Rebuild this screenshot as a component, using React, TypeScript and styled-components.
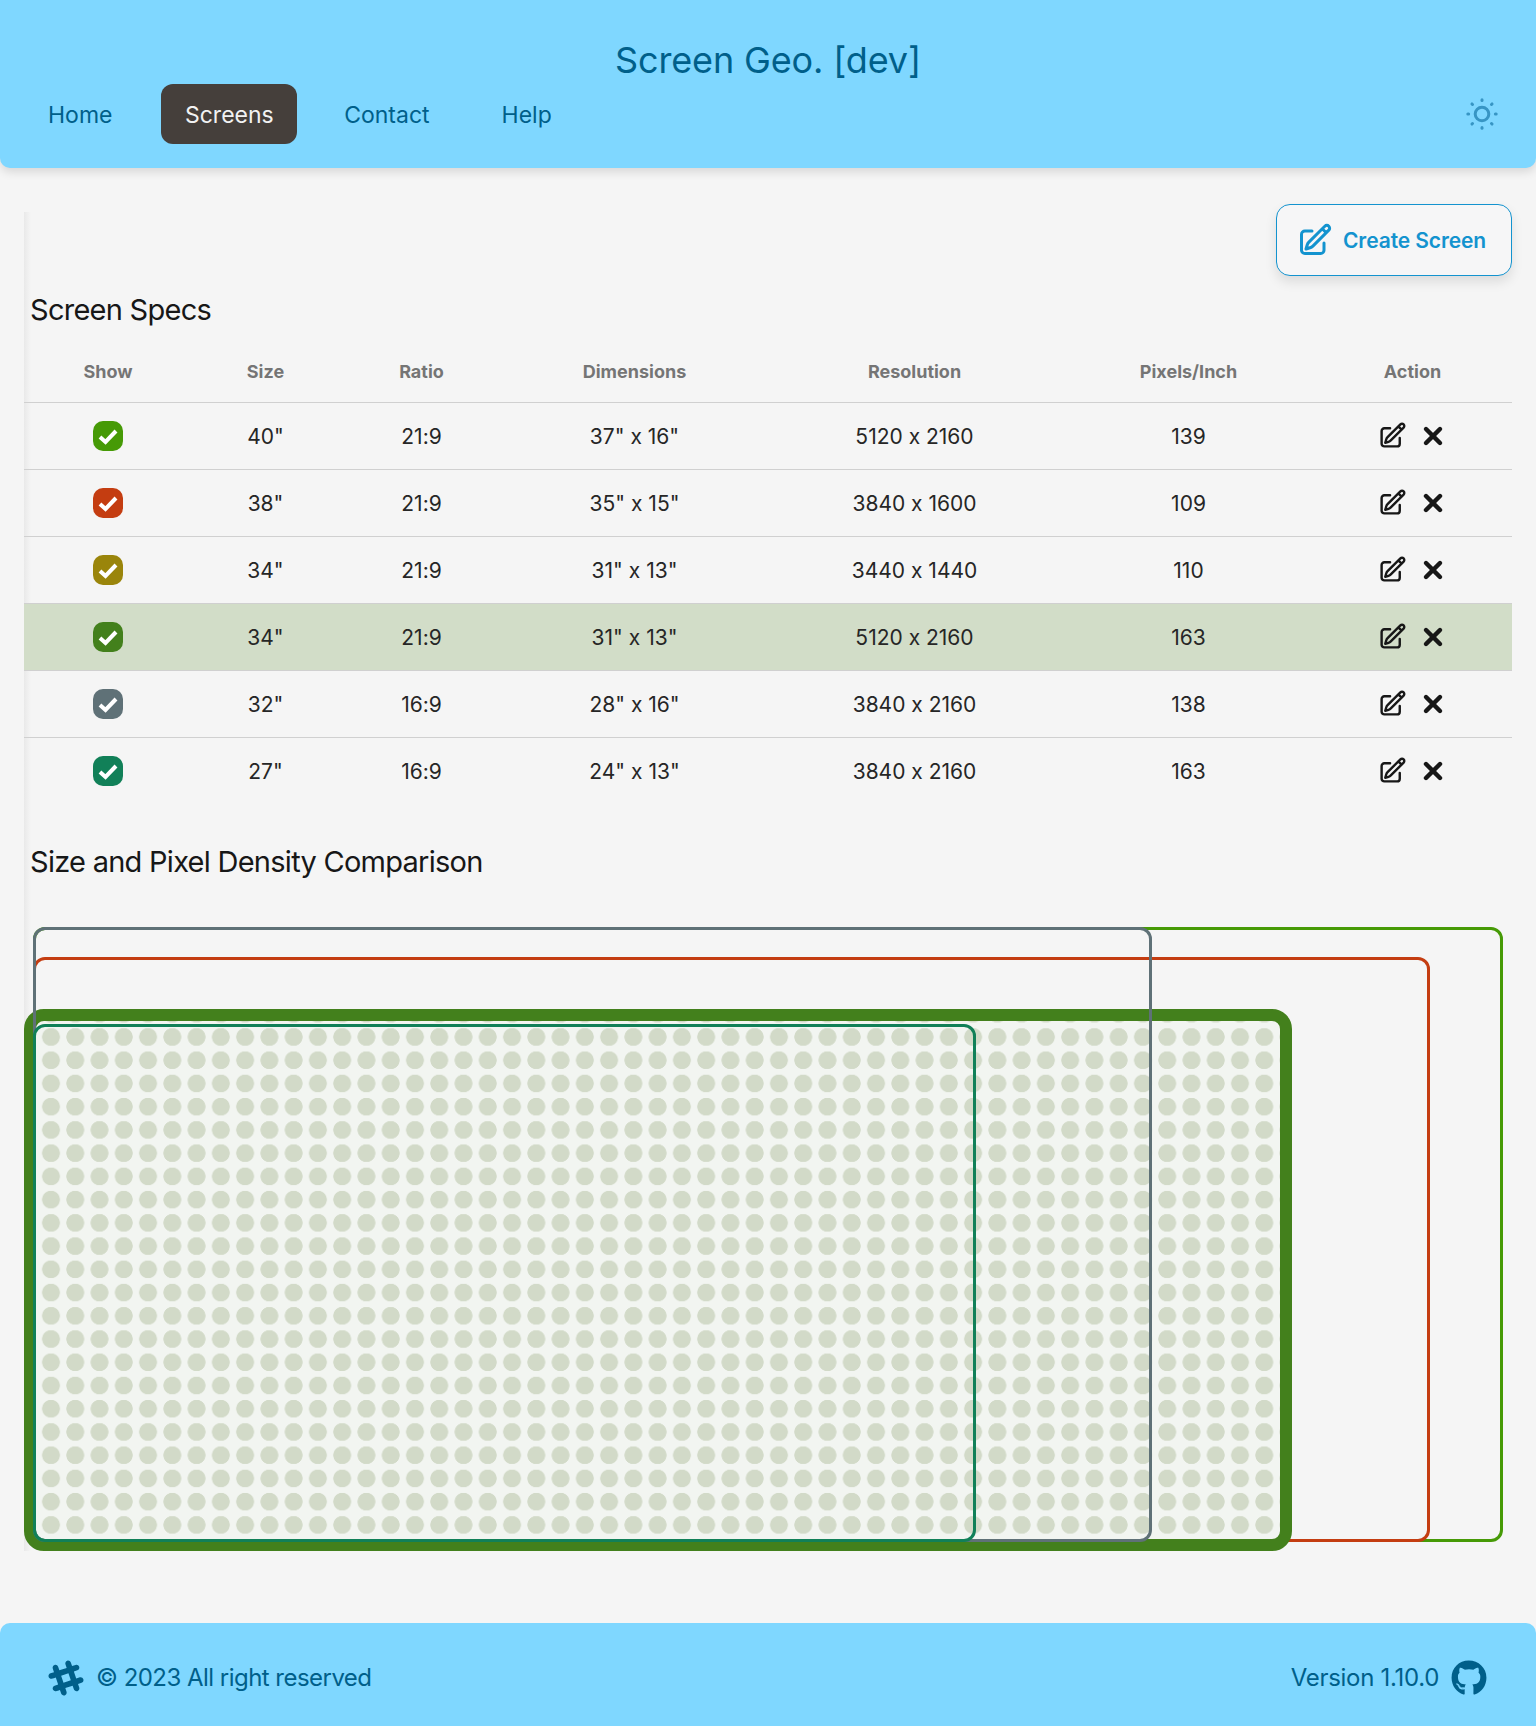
import styled, { createGlobalStyle } from 'styled-components';
import { FaGithub, FaSlackHash } from 'react-icons/fa';
import { HiOutlinePencilSquare } from 'react-icons/hi2';
import { X } from 'lucide-react';

const GlobalStyle = createGlobalStyle`
	* {
		box-sizing: border-box;
	}
	body {
		margin: 0;
		background-color: #f5f5f5;
		color: #171717;
		font-family: Inter, 'Liberation Sans', sans-serif;
		font-feature-settings: 'calt' 0;
	}
`;

const Header = styled.header`
	height: 168px;
	padding: 41px 24px 0;
	background-color: #7fd7ff;
	border-radius: 0 0 10px 10px;
	box-shadow: 0 4px 10px rgba(0, 0, 0, 0.12);
`;
const Title = styled.h1`
	margin: 0;
	height: 38px;
	font-size: 36px;
	line-height: 38px;
	font-weight: 400;
	letter-spacing: -0.15px;
	text-align: center;
	color: #005f8a;
`;
const NavBar = styled.nav`
	display: flex;
	align-items: center;
	justify-content: space-between;
	margin-top: 5px;
`;
const NavLinks = styled.div`
	display: flex;
	gap: 24px;
`;
const NavLink = styled.a<{ $active?: boolean }>`
	height: 60px;
	margin: ${(props) => (props.$active ? '0 -1px 0 1px' : '0')};
	padding: ${(props) => (props.$active ? '2px 23.5px 0' : '2px 24px 0')};
	display: flex;
	align-items: center;
	font-size: 23px;
	border-radius: 12px;
	color: ${(props) => (props.$active ? '#f2f2f2' : '#005f8a')};
	background-color: ${(props) => (props.$active ? '#453f3b' : 'transparent')};
`;
const SunIcon = styled.svg`
	width: 32px;
	height: 32px;
	margin-right: 14px;
	color: #3795c4;
`;

const Main = styled.main`
	padding: 36px 24px 72px;
`;
const Panel = styled.section`
	background: linear-gradient(to right, #e9e9e9, #f5f5f5) no-repeat 0 8px / 7px calc(100% - 8px);
`;
const Toolbar = styled.div`
	display: flex;
	justify-content: flex-end;
`;
const CreateButton = styled.button`
	width: 236px;
	height: 72px;
	padding: 0 0 0 20px;
	display: flex;
	align-items: center;
	gap: 10px;
	font-family: inherit;
	font-feature-settings: inherit;
	font-size: 21px;
	font-weight: 600;
	letter-spacing: -0.1px;
	color: #1393cf;
	background-color: #f6f6f7;
	border: 1px solid #1393cf;
	border-radius: 14px;
	box-shadow: 0 6px 12px rgba(0, 0, 0, 0.1);
`;
const SectionTitle = styled.h2<{ $top: number }>`
	margin: ${(props) => props.$top}px 0 0 6px;
	height: 34px;
	font-size: 29px;
	line-height: 34px;
	font-weight: 400;
	letter-spacing: -0.73px;
`;
const SpecTable = styled.table`
	width: 100%;
	margin-top: 13px;
	border-collapse: collapse;
	table-layout: fixed;
`;
const HeadCell = styled.th`
	height: 62px;
	padding: 2px 0 0;
	font-size: 18px;
	font-weight: 700;
	color: #757575;
	border-bottom: 1px solid #d0d0d0;
`;
const Row = styled.tr<{ $selected?: boolean }>`
	height: 67px;
	background-color: ${(props) => (props.$selected ? '#d2ddc8' : 'transparent')};
	border-bottom: 1px solid #d0d0d0;
	&:last-child {
		border-bottom: none;
	}
`;
const Cell = styled.td`
	padding: 2px 0 0;
	font-size: 21px;
	text-align: center;
	color: #262626;
`;
const ShowIcon = styled.svg`
	display: block;
	width: 30px;
	height: 30px;
	margin: -2px auto 0;
`;
const Actions = styled.div`
	display: flex;
	align-items: center;
	justify-content: center;
	gap: 12px;
	margin-top: -2px;
	color: #171717;
`;

const Stage = styled.div`
	position: relative;
	height: 624px;
	margin-top: 48px;
`;
const ScreenBox = styled.div<{ $left: number; $top: number; $width: number; $height: number; $color: string }>`
	position: absolute;
	left: ${(props) => props.$left}px;
	top: ${(props) => props.$top}px;
	width: ${(props) => props.$width}px;
	height: ${(props) => props.$height}px;
	border: 3px solid ${(props) => props.$color};
	border-radius: 12px;
`;
const SelectedBox = styled(ScreenBox)`
	border-width: 12px;
	border-radius: 20px;
	background-color: #f2f5f1;
	background-image: radial-gradient(circle at center, #d2dac8 8.6px, transparent 9.2px);
	background-size: 24.28px 23.24px;
	background-position: 2.86px 4.38px;
`;

const Footer = styled.footer`
	height: 103px;
	padding: 6px 49px 0 46px;
	display: flex;
	align-items: center;
	justify-content: space-between;
	font-size: 24px;
	color: #005f8a;
	background-color: #7fd7ff;
	border-radius: 10px 10px 0 0;
`;
const FooterGroup = styled.div<{ $gap: number }>`
	display: flex;
	align-items: center;
	gap: ${(props) => props.$gap}px;
`;
const FooterText = styled.span<{ $spacing: number }>`
	letter-spacing: ${(props) => props.$spacing}px;
`;

const columns = [
	{ label: 'Show', width: 168 },
	{ label: 'Size', width: 147 },
	{ label: 'Ratio', width: 165 },
	{ label: 'Dimensions', width: 261 },
	{ label: 'Resolution', width: 299 },
	{ label: 'Pixels/Inch', width: 249 },
	{ label: 'Action', width: 199 },
];

const screens = [
	{ size: '40"', ratio: '21:9', dims: '37" x 16"', res: '5120 x 2160', ppi: 139, color: '#469a06' },
	{ size: '38"', ratio: '21:9', dims: '35" x 15"', res: '3840 x 1600', ppi: 109, color: '#c43d11' },
	{ size: '34"', ratio: '21:9', dims: '31" x 13"', res: '3440 x 1440', ppi: 110, color: '#9a850b' },
	{ size: '34"', ratio: '21:9', dims: '31" x 13"', res: '5120 x 2160', ppi: 163, color: '#43801c', selected: true },
	{ size: '32"', ratio: '16:9', dims: '28" x 16"', res: '3840 x 2160', ppi: 138, color: '#5f7177' },
	{ size: '27"', ratio: '16:9', dims: '24" x 13"', res: '3840 x 2160', ppi: 163, color: '#118058' },
];

function CheckBadge({ color }: { color: string }) {
	return (
		<ShowIcon viewBox='0 0 30 30'>
			<rect width='30' height='30' rx='10' fill={color} />
			<polyline points='7,16 12.5,21 23,10' fill='none' stroke='#fff' strokeWidth='4' />
		</ShowIcon>
	);
}

function Sun() {
	const rays = [0, 45, 90, 135, 180, 225, 270, 315];
	return (
		<SunIcon viewBox='0 0 32 32' fill='none' stroke='currentColor' strokeLinecap='round'>
			<circle cx='16' cy='16' r='6.8' strokeWidth='3' />
			{rays.map((angle) => (
				<line key={angle} x1='16' y1='1.8' x2='16' y2='2.6' strokeWidth='3' transform={`rotate(${angle} 16 16)`} />
			))}
		</SunIcon>
	);
}

function App() {
	return (
		<>
			<GlobalStyle />
			<Header>
				<Title>Screen Geo. [dev]</Title>
				<NavBar>
					<NavLinks>
						<NavLink>Home</NavLink>
						<NavLink $active>Screens</NavLink>
						<NavLink>Contact</NavLink>
						<NavLink>Help</NavLink>
					</NavLinks>
					<Sun />
				</NavBar>
			</Header>
			<Main>
				<Panel>
					<Toolbar>
						<CreateButton>
							<HiOutlinePencilSquare size={36} strokeWidth={2} />
							Create Screen
						</CreateButton>
					</Toolbar>
					<SectionTitle $top={17}>Screen Specs</SectionTitle>
					<SpecTable>
						<colgroup>
							{columns.map((col) => (
								<col key={col.label} width={col.width} />
							))}
						</colgroup>
						<thead>
							<tr>
								{columns.map((col) => (
									<HeadCell key={col.label}>{col.label}</HeadCell>
								))}
							</tr>
						</thead>
						<tbody>
							{screens.map((screen) => (
								<Row key={screen.color} $selected={screen.selected}>
									<Cell>
										<CheckBadge color={screen.color} />
									</Cell>
									<Cell>{screen.size}</Cell>
									<Cell>{screen.ratio}</Cell>
									<Cell>{screen.dims}</Cell>
									<Cell>{screen.res}</Cell>
									<Cell>{screen.ppi}</Cell>
									<Cell>
										<Actions>
											<HiOutlinePencilSquare size={29} strokeWidth={2} />
											<X size={28} strokeWidth={3.8} />
										</Actions>
									</Cell>
								</Row>
							))}
						</tbody>
					</SpecTable>
					<SectionTitle $top={41}>Size and Pixel Density Comparison</SectionTitle>
					<Stage>
						<ScreenBox $left={9} $top={0} $width={1470} $height={615} $color='#469a06' />
						<ScreenBox $left={9} $top={30} $width={1397} $height={585} $color='#c43d11' />
						<SelectedBox $left={0} $top={82} $width={1267.5} $height={542} $color='#43801c' />
						<ScreenBox $left={9} $top={0} $width={1118.5} $height={615} $color='#5f7177' />
						<ScreenBox $left={9} $top={97} $width={943} $height={518} $color='#118058' />
					</Stage>
				</Panel>
			</Main>
			<Footer>
				<FooterGroup $gap={10}>
					<FaSlackHash size={40} />
					<FooterText $spacing={-0.53}>© 2023 All right reserved</FooterText>
				</FooterGroup>
				<FooterGroup $gap={12}>
					<FooterText $spacing={-0.3}>Version 1.10.0</FooterText>
					<FaGithub size={36} />
				</FooterGroup>
			</Footer>
		</>
	);
}

export default App;
